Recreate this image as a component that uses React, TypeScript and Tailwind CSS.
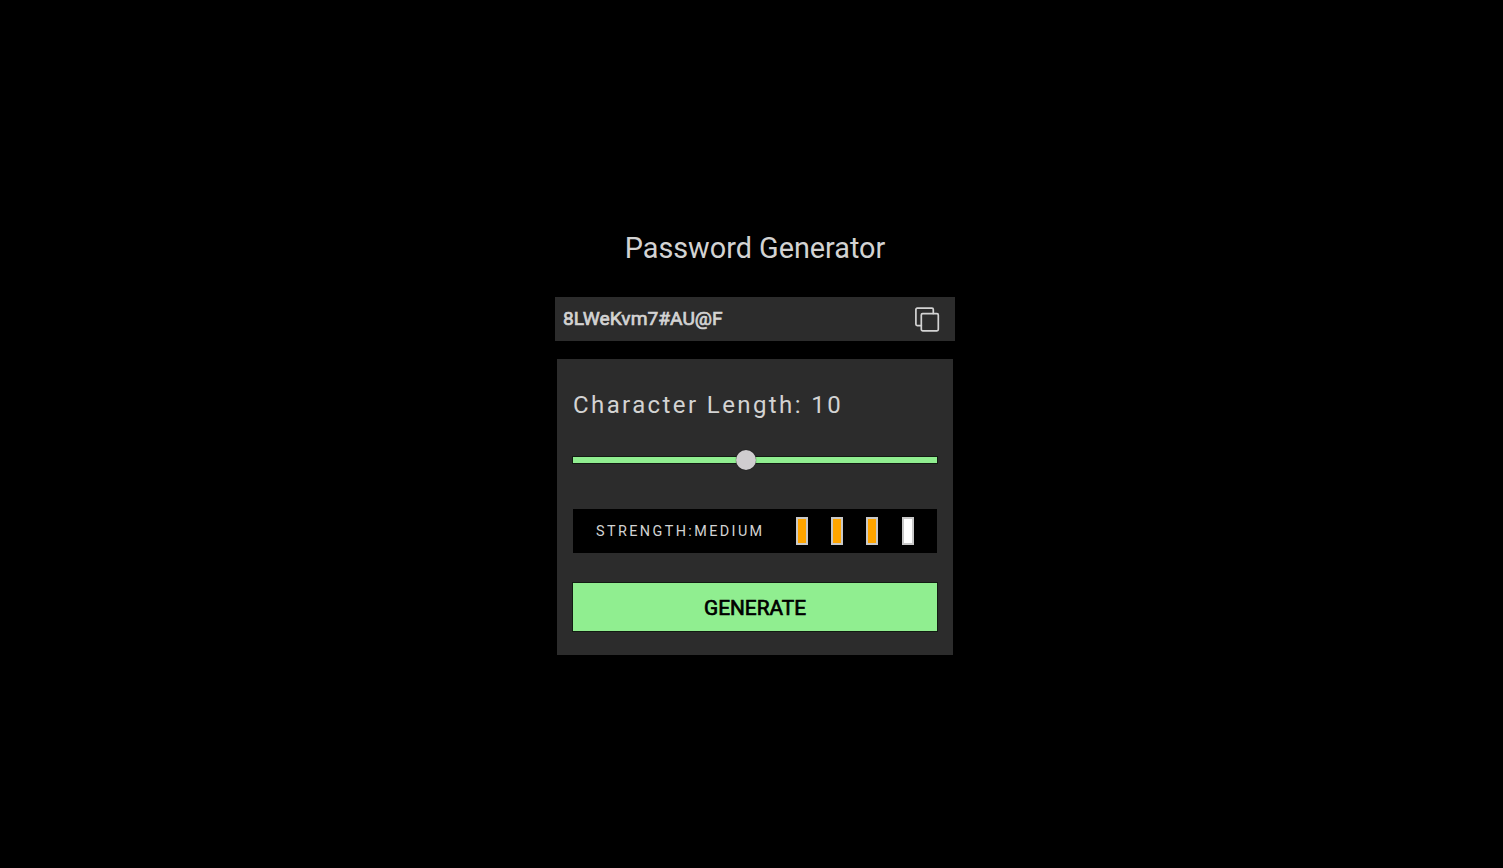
const filled = [true, true, true, false];

function CopyIcon() {
  return (
    <svg width="26" height="26" viewBox="0 0 26 26" fill="none" stroke="#d3d3d3" strokeWidth="1.7" strokeLinejoin="round" strokeLinecap="round">
      <rect x="7.3" y="7.6" width="17" height="17.2" rx="1.3" />
      <path d="M7.3 19.6H3.2a1.3 1.3 0 0 1-1.3-1.3V3.5a1.3 1.3 0 0 1 1.3-1.3h14.8a1.3 1.3 0 0 1 1.3 1.3v4" />
    </svg>
  );
}

export default function App() {
  return (
    <div className="flex h-[868px] w-full flex-col items-center bg-black pt-[228px] pl-[7px] font-[Roboto,sans-serif] text-[#d3d3d3]">
      <h1 className="h-10 text-[28.8px] leading-10 whitespace-nowrap">Password Generator</h1>
      <div className="mt-[29px] flex h-11 w-[400px] items-center justify-between bg-[#2c2c2c] pr-[15px] pl-2">
        <span className="text-[19.2px] leading-[44px] [-webkit-text-stroke:0.7px_#d3d3d3]">8LWeKvm7#AU@F</span>
        <CopyIcon />
      </div>
      <main className="mt-[18px] flex h-[296px] w-[396px] flex-col bg-[#2c2c2c] px-4">
        <p className="mt-[30px] h-8 text-[24px] leading-8 tracking-[2.4px] whitespace-nowrap">Character Length: 10</p>
        <div className="mt-[29px] flex h-5 w-full items-center">
          <div className="flex h-1.5 w-full items-center bg-[#90ee90] pl-[163px] shadow-[0_0_0_1px_#121c12]">
            <div className="size-5 shrink-0 rounded-full bg-[#cfcdcf] shadow-[0_0_1px_#000]" />
          </div>
        </div>
        <div className="mt-[39px] flex h-11 items-center justify-between bg-black pr-[23.3px] pl-[23px]">
          <span className="pt-0.5 text-[14.4px] leading-5 tracking-[2.4px] whitespace-nowrap">STRENGTH:MEDIUM</span>
          <div className="flex w-[117.9px] justify-between">
            {filled.map((on, i) => (
              <span key={i} className={`h-7 w-3 border-2 border-[#c8c8c8] ${on ? "bg-[#ffa500]" : "bg-white"}`} />
            ))}
          </div>
        </div>
        <button className="mt-[30px] h-12 bg-[#90ee90] pt-0.5 text-[20.8px] leading-6 text-black shadow-[0_0_0_1px_#121c12] [-webkit-text-stroke:0.7px_#000]">GENERATE</button>
      </main>
    </div>
  );
}
